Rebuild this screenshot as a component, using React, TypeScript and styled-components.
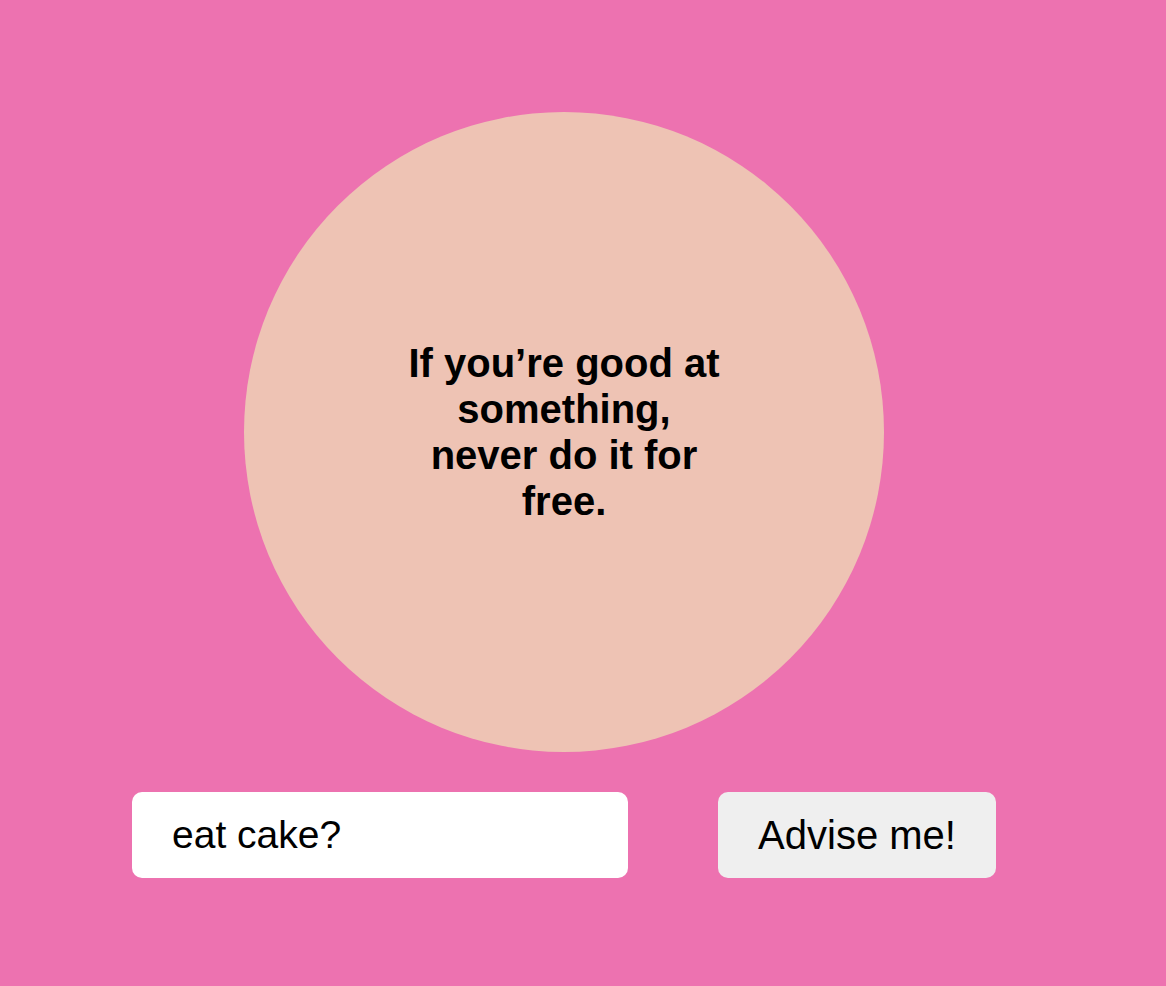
import React, { useState } from 'react';
import styled, { createGlobalStyle } from 'styled-components';

const GlobalStyle = createGlobalStyle`
  html, body {
    margin: 0;
    padding: 0;
    background: #ed72b0;
    font-family: "Liberation Sans", Arial, Helvetica, sans-serif;
  }
`;

const Page = styled.main`
  min-height: 986px;
  padding: 112px 0 0 132px;
  box-sizing: border-box;
`;

const Column = styled.div`
  width: 864px;
  display: flex;
  flex-direction: column;
  align-items: center;
  gap: 40px;
`;

const Bubble = styled.div`
  width: 640px;
  height: 640px;
  border-radius: 50%;
  background: #eec3b4;
  display: flex;
  align-items: center;
  justify-content: center;
`;

const Quote = styled.p`
  width: 320px;
  margin: 0;
  text-align: center;
  font-size: 40px;
  font-weight: bold;
  line-height: 46px;
  color: #000;
`;

const Form = styled.form`
  width: 100%;
  display: flex;
  justify-content: space-between;
`;

const Field = styled.input`
  width: 496px;
  height: 86px;
  box-sizing: border-box;
  border: none;
  border-radius: 10px;
  background: #fff;
  padding: 0 40px;
  font-family: inherit;
  font-size: 39px;
  color: #000;
  outline: none;
`;

const AdviseButton = styled.button`
  width: 278px;
  height: 86px;
  border: none;
  border-radius: 10px;
  background: #efefef;
  font-family: inherit;
  font-size: 40px;
  color: #000;
  cursor: pointer;
`;

export default function App() {
  const [question, setQuestion] = useState('eat cake?');

  return (
    <>
      <GlobalStyle />
      <Page>
        <Column>
          <Bubble>
            <Quote>If you’re good at something, never do it for free.</Quote>
          </Bubble>
          <Form onSubmit={(e) => e.preventDefault()}>
            <Field value={question} onChange={(e) => setQuestion(e.target.value)} />
            <AdviseButton type="submit">Advise me!</AdviseButton>
          </Form>
        </Column>
      </Page>
    </>
  );
}
